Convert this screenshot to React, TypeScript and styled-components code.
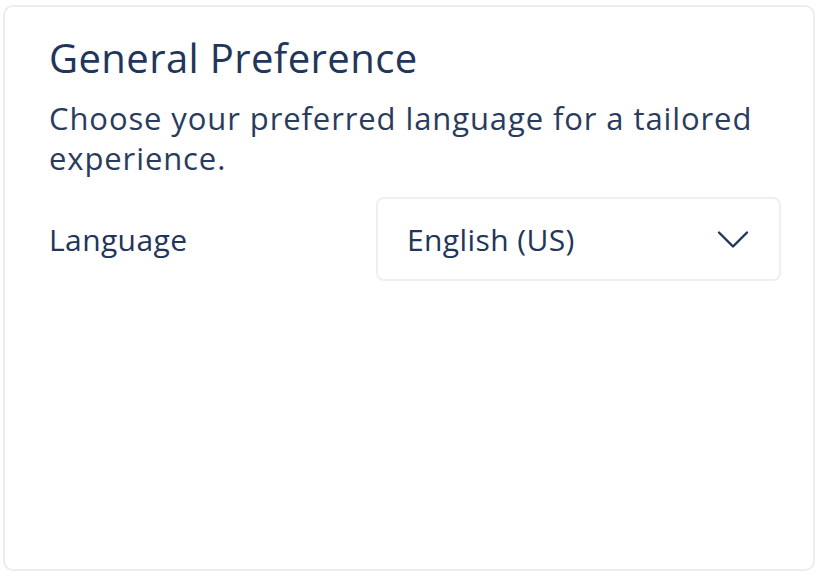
import React from "react";
import styled, { createGlobalStyle } from "styled-components";

const GlobalStyle = createGlobalStyle`
  html, body {
    margin: 0;
    padding: 0;
    background: #ffffff;
  }
  body {
    font-family: "Open Sans", Lato, sans-serif;
    color: #22355a;
  }
`;

const Card = styled.section`
  box-sizing: border-box;
  width: 812px;
  height: 566px;
  margin: 5px 0 0 3px;
  padding: 27px 34px 0 44px;
  border: 2px solid #ececec;
  border-radius: 10px;
  background: #fff;
`;

const Title = styled.h2`
  margin: 0;
  font-size: 40px;
  font-weight: 500;
  line-height: 48px;
  letter-spacing: 0.4px;
  color: #22355a;
`;

const Description = styled.p`
  margin: 16px 0 0;
  font-size: 31px;
  font-weight: 400;
  line-height: 40px;
  letter-spacing: 0.9px;
  color: #2a3c5e;
`;

const FieldRow = styled.div`
  display: grid;
  grid-template-columns: 327px 405px;
  align-items: center;
  margin-top: 19px;
`;

const Label = styled.label`
  font-size: 30px;
  font-weight: 500;
  letter-spacing: 0.4px;
  color: #22355a;
`;

const Select = styled.button`
  box-sizing: border-box;
  display: flex;
  align-items: center;
  justify-content: space-between;
  width: 405px;
  height: 84px;
  padding: 0 30px 0 29px;
  border: 2px solid #efefef;
  border-radius: 8px;
  background: #fff;
  font-family: inherit;
  font-size: 30px;
  letter-spacing: 0.4px;
  color: #22355a;
  cursor: pointer;
`;

const Chevron = () => (
  <svg width="32" height="19" viewBox="0 0 32 19" fill="none">
    <path d="M2 2.5 L16 16.5 L30 2.5" stroke="#22355a" strokeWidth="2.4" strokeLinecap="round" strokeLinejoin="round" />
  </svg>
);

export default function App() {
  return (
    <>
      <GlobalStyle />
      <Card>
        <Title>General Preference</Title>
        <Description>Choose your preferred language for a tailored experience.</Description>
        <FieldRow>
          <Label>Language</Label>
          <Select type="button">
            <span>English (US)</span>
            <Chevron />
          </Select>
        </FieldRow>
      </Card>
    </>
  );
}
